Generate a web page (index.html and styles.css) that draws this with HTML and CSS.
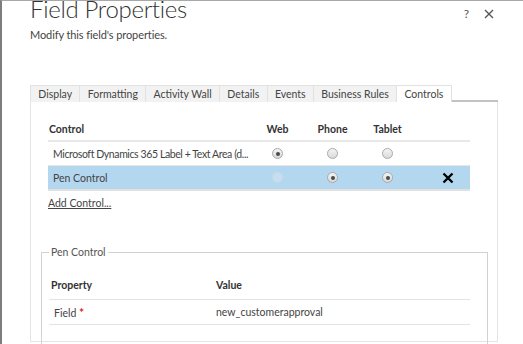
FILE: index.html
```html
<!DOCTYPE html>
<html lang="en">
<head>
  <meta charset="UTF-8">
  <title>Field Properties</title>
  <link rel="stylesheet" href="styles.css">
</head>
<body>
  <div class="dialog">
    <div class="head">
      <h1>Field Properties</h1>
      <div class="head-icons">
        <span class="help">?</span>
        <svg class="close" width="10" height="10" viewBox="0 0 10 10"><path d="M1 1L9 9M9 1L1 9" stroke="#555" stroke-width="1.4"/></svg>
      </div>
    </div>
    <p class="sub">Modify this field's properties.</p>

    <div class="tabs">
      <span class="tab">Display</span>
      <span class="tab">Formatting</span>
      <span class="tab">Activity Wall</span>
      <span class="tab">Details</span>
      <span class="tab">Events</span>
      <span class="tab">Business Rules</span>
      <span class="tab active">Controls</span>
      <span class="tab-fill"></span>
    </div>

    <div class="panel">
      <div class="controls">
        <div class="row hdr">
          <span class="c-name">Control</span>
          <span class="c-dev">Web</span>
          <span class="c-dev">Phone</span>
          <span class="c-dev">Tablet</span>
          <span class="c-dev"></span>
        </div>
        <div class="row">
          <span class="c-name long">Microsoft Dynamics 365 Label + Text Area (d...</span>
          <span class="c-dev"><i class="radio on"></i></span>
          <span class="c-dev"><i class="radio"></i></span>
          <span class="c-dev"><i class="radio"></i></span>
          <span class="c-dev"></span>
        </div>
        <div class="row sel">
          <span class="c-name">Pen Control</span>
          <span class="c-dev"><i class="radio off"></i></span>
          <span class="c-dev"><i class="radio on"></i></span>
          <span class="c-dev"><i class="radio on"></i></span>
          <span class="c-dev">
            <svg class="remove" width="12" height="12" viewBox="0 0 12 12"><path d="M1.5 1.5L10.5 10.5M10.5 1.5L1.5 10.5" stroke="#000" stroke-width="2.4"/></svg>
          </span>
        </div>
      </div>
      <a class="add" href="#">Add Control...</a>

      <fieldset class="props">
        <legend>Pen Control</legend>
        <div class="prow phdr">
          <span class="p-name">Property</span>
          <span class="p-val">Value</span>
        </div>
        <div class="prow">
          <span class="p-name">Field <b class="req">*</b></span>
          <span class="p-val">new_customerapproval</span>
        </div>
      </fieldset>
    </div>
  </div>
</body>
</html>
```

FILE: styles.css
```css
body {
  margin: 0;
  background: #fff;
  font-family: Lato, "Open Sans", sans-serif;
  color: #444;
  overflow: hidden;
}

.dialog {
  height: 344px;
  border-left: 2px solid #7d7d7d;
  border-top: 1px solid #a8a8a8;
  box-sizing: border-box;
}

.head {
  display: flex;
  justify-content: space-between;
  align-items: flex-start;
  padding-left: 28px;
  height: 25px;
}

h1 {
  margin: -9px 0 0 0;
  font-size: 24px;
  font-weight: 300;
  line-height: 34px;
  letter-spacing: -0.3px;
  color: #333;
}

.head-icons {
  display: flex;
  align-items: center;
  gap: 15px;
  margin: 7px 29px 0 0;
}

.help {
  font-size: 12px;
  color: #555;
  line-height: 12px;
}

.sub {
  margin: 2px 0 0 28px;
  font-size: 11px;
  line-height: 14px;
  letter-spacing: -0.1px;
  color: #444;
}

.tabs {
  display: flex;
  margin: 43px 0 0 28px;
  width: 468px;
  height: 17px;
}

.tab {
  font-size: 10.5px;
  line-height: 16px;
  padding: 0 7.3px;
  background: #f2f2f2;
  border: 1px solid #e2e2e2;
  border-bottom: none;
  border-left: none;
  color: #444;
  white-space: nowrap;
}

.tab:first-child {
  border-left: 1px solid #e2e2e2;
}

.tab.active {
  background: #fff;
}

.tab-fill {
  flex: 1;
  border-bottom: 2px solid #c2c2c2;
}

.panel {
  width: 468px;
  margin-left: 28px;
  height: 240px;
  border: 1px solid #e4e4e4;
  border-top: none;
  box-sizing: border-box;
  padding-top: 15px;
}

.controls {
  margin-left: 17px;
  width: 422px;
}

.row {
  display: flex;
  align-items: center;
  height: 23px;
  border-bottom: 1px solid #e6e6e6;
  font-size: 10.5px;
}

.row.hdr {
  height: 23px;
  border-bottom: 2px solid #e8e8e8;
  font-weight: 700;
  color: #333;
}

.row.sel {
  background: #b4d7f0;
  border-bottom: 2px solid #e0e0e0;
}

.c-name {
  width: 202px;
  padding-left: 5px;
  box-sizing: border-box;
  white-space: nowrap;
  overflow: hidden;
}

.c-name.long {
  letter-spacing: -0.4px;
}

.hdr .c-name {
  padding-left: 1px;
}

.c-dev {
  width: 55px;
  display: flex;
  justify-content: center;
  align-items: center;
}

.radio {
  display: block;
  width: 11px;
  height: 11px;
  border-radius: 50%;
  border: 1px solid #a9a9a9;
  background: linear-gradient(#f4f4f4, #d9d9d9);
  box-sizing: border-box;
  position: relative;
}

.radio.on::after {
  content: "";
  position: absolute;
  left: 2.5px;
  top: 2.5px;
  width: 4px;
  height: 4px;
  border-radius: 50%;
  background: #4a4a4a;
}

.radio.off {
  border-color: #c6d9e8;
  background: #c8def0;
}

.remove {
  margin-left: 10px;
}

.add {
  display: inline-block;
  margin: 4px 0 0 17px;
  font-size: 10.5px;
  line-height: 14px;
  color: #444;
  text-decoration: underline;
}

.props {
  margin: 36px 9px 0 10px;
  padding: 12px 17px 30px 7px;
  border: 1px solid #d2d2d2;
  border-bottom: none;
}

.props legend {
  font-size: 10.5px;
  padding: 0 2px;
  margin-left: 0;
  color: #555;
}

.prow {
  display: flex;
  align-items: center;
  height: 24px;
  border-bottom: 1px solid #e4e4e4;
  font-size: 10.5px;
}

.prow.phdr {
  height: 29px;
  font-weight: 700;
  color: #333;
}

.p-name {
  width: 167px;
  padding-left: 5px;
  box-sizing: border-box;
}

.phdr .p-name {
  padding-left: 2px;
}

.req {
  color: #e31b1b;
  font-weight: 700;
  font-size: 12px;
}
```
